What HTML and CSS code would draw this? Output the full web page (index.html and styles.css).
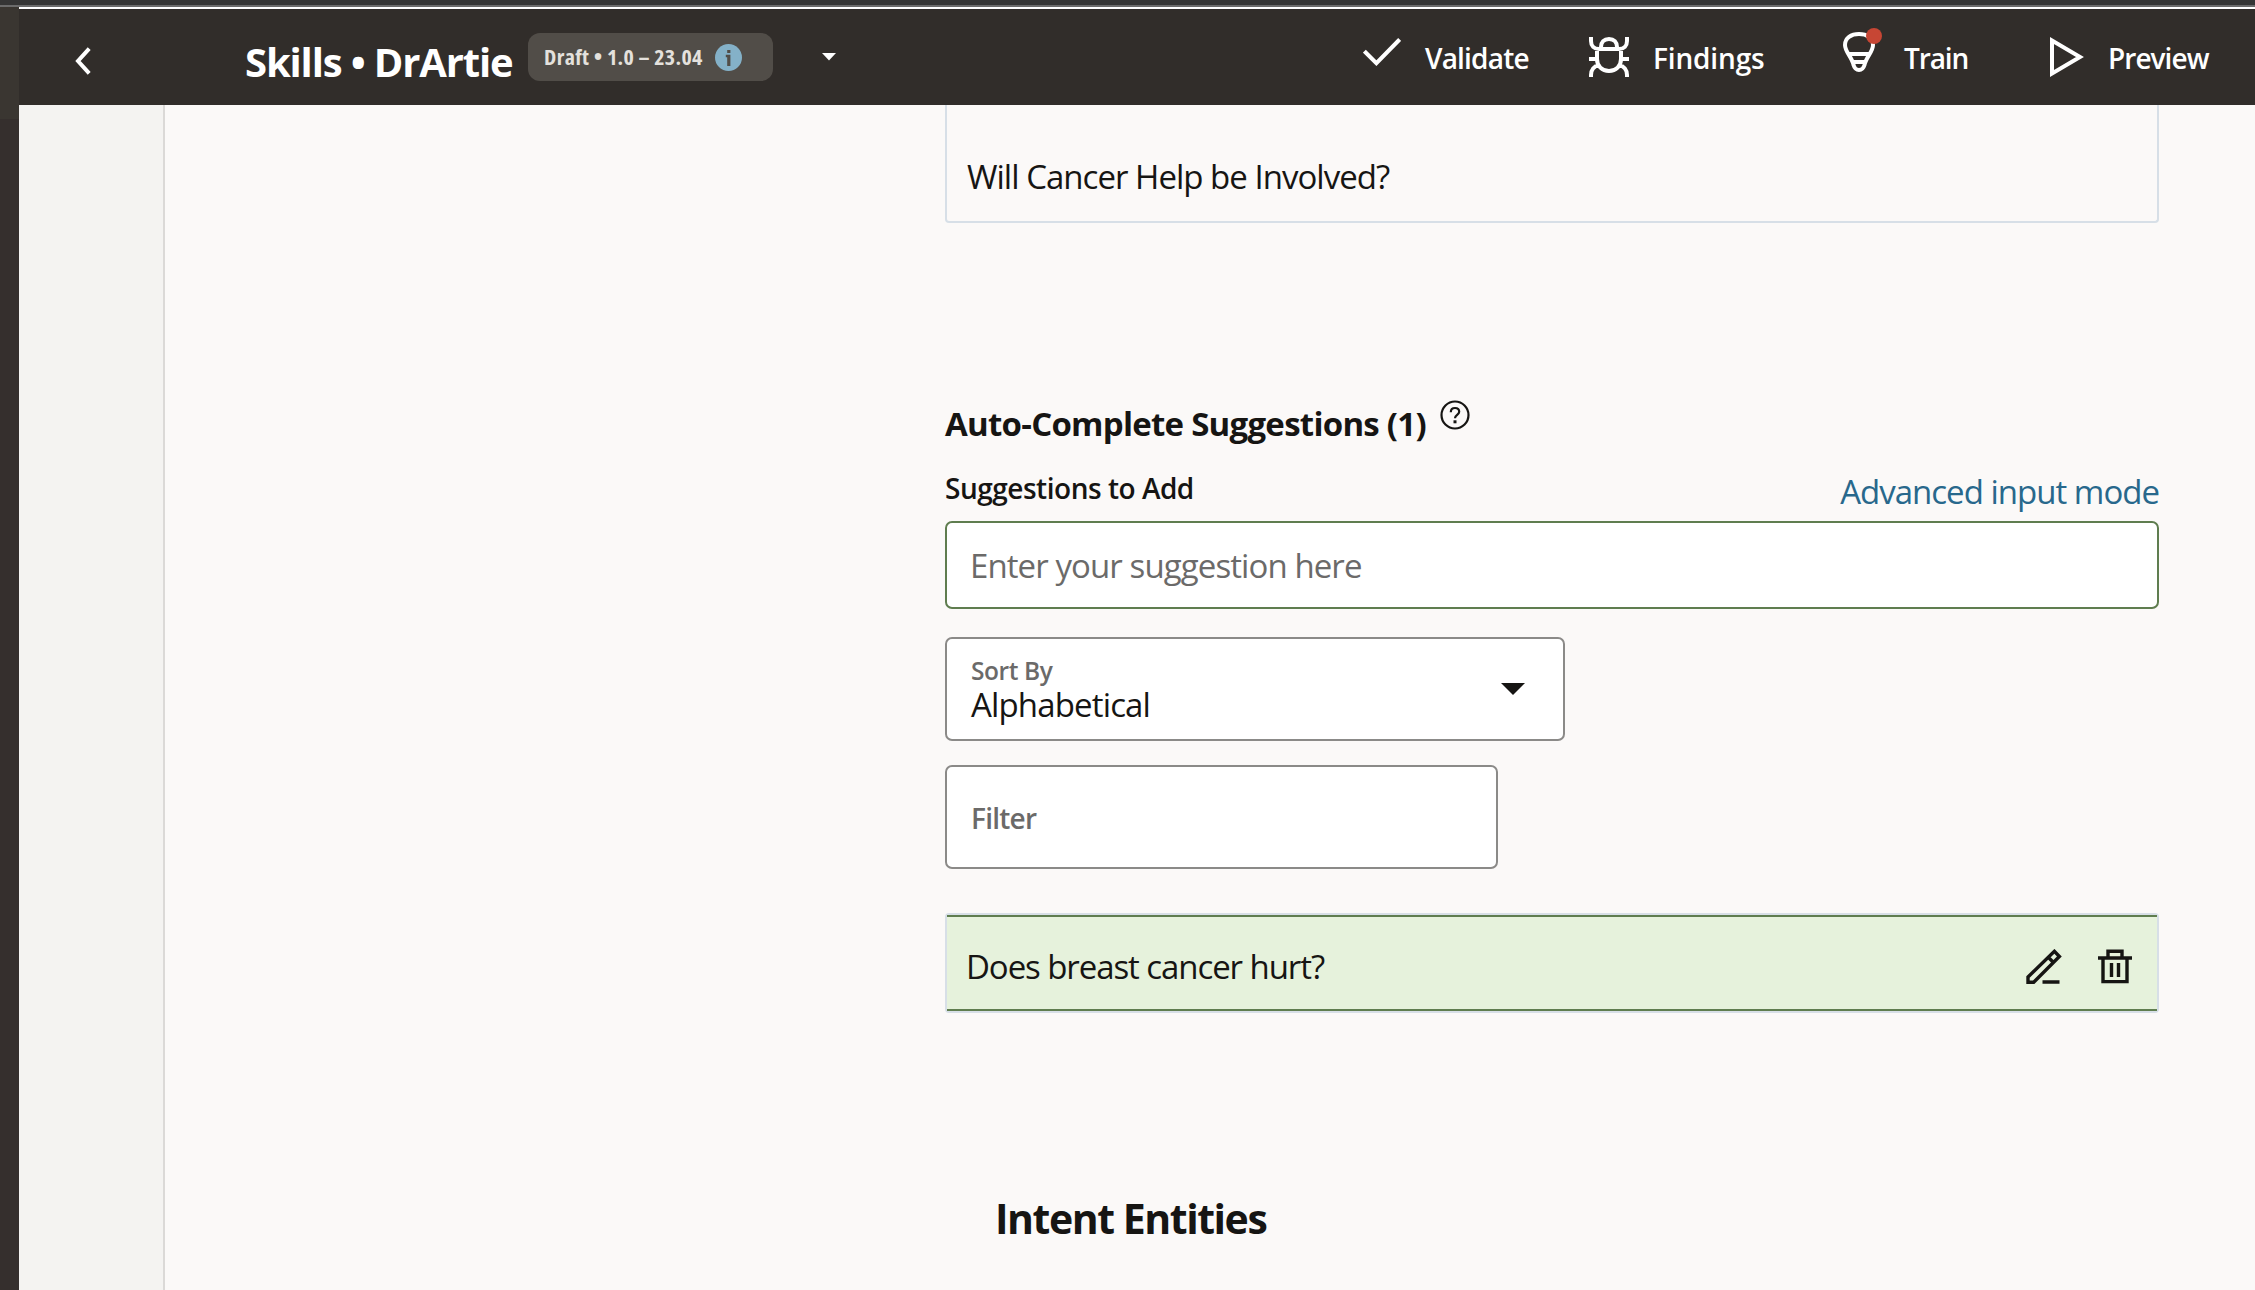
FILE: index.html
```
<!DOCTYPE html>
<html lang="en">
<head>
<meta charset="utf-8">
<title>Skills • DrArtie</title>
<link rel="stylesheet" href="styles.css">
</head>
<body>
<div class="window-edge"></div>
<div class="shell">
  <div class="rail"></div>
  <div class="app">
    <header class="topbar">
      <svg class="back" width="16" height="28" viewBox="0 0 16 28"><path d="M14.2 1.6 3 14l11.2 12.4" fill="none" stroke="#fff" stroke-width="4"/></svg>
      <h1 class="title">Skills • DrArtie</h1>
      <div class="badge">
        <span class="badge-text">Draft • 1.0 – 23.04</span>
        <svg width="27" height="27" viewBox="0 0 27 27"><circle cx="13.5" cy="13.5" r="13.5" fill="#84b1c8"/><path d="M12.2 6h3.2v3h-3.2zM10.8 10.8h4.6V22h-3.2v-8.800h-1.4z" fill="#514d48"/></svg>
      </div>
      <svg class="version-caret" width="14" height="8" viewBox="0 0 14 8"><path d="M0 0h14L7 7.5z" fill="#fff"/></svg>
      <nav class="actions">
        <button class="action validate">
          <svg width="38" height="28" viewBox="0 0 38 28"><path d="m1.4 13.2 12 12L36.600 1.500" fill="none" stroke="#fff" stroke-width="4"/></svg>
          <span>Validate</span>
        </button>
        <button class="action findings">
          <svg width="40" height="40" viewBox="0 0 40 40" fill="none" stroke="#fff" stroke-width="4"><path d="M2 0v4c0 5 3 8 8 8M38 0v4c0 5-3 8-8 8M0 22h8M32 22h8M2 40v-2c0-5 3-9 8-10M38 40v-2c0-5-3-9-8-10M8 12h24v10c0 7-5 12-12 12S8 29 8 22zM12 12v-2c0-5 3-8 8-8s8 3 8 8v2"/></svg>
          <span>Findings</span>
        </button>
        <button class="action train">
          <svg width="40" height="45" viewBox="0 0 40 45"><path d="M16 6C8 6 2 10 2 17c0 7 7 12 8.500 20 1 3.300 3 5 5.500 5s4.500-1.700 5.500-5C23 29 30 24 30 17c0-7-6-11-14-11zM6 26h20M9.500 34h13" fill="none" stroke="#fff" stroke-width="4"/><circle cx="31" cy="8" r="8" fill="#c74634"/></svg>
          <span>Train</span>
        </button>
        <button class="action preview">
          <svg width="34" height="40" viewBox="0 0 34 40"><path d="M2 3.500v33L30 20z" fill="none" stroke="#fff" stroke-width="4"/></svg>
          <span>Preview</span>
        </button>
      </nav>
    </header>
    <div class="content">
      <aside class="side"></aside>
      <main class="main">
        <div class="utterances"><p class="item-text will">Will Cancer Help be Involved?</p></div>
        <div class="heading">
          <h2>Auto-Complete Suggestions (1)</h2>
          <svg width="30" height="30" viewBox="0 0 30 30" fill="none" stroke="#161513" stroke-width="2.200"><circle cx="15" cy="15" r="13.500"/><path d="M10.800 12.200c0-2.700 1.700-4.200 4.200-4.200s4.200 1.500 4.200 3.800c0 3-4.200 3.200-4.200 6.400"/><path d="M15 20.300v3" stroke-width="3"/></svg>
        </div>
        <div class="label-row">
          <span class="label">Suggestions to Add</span>
          <a class="mode-link">Advanced input mode</a>
        </div>
        <div class="suggestion-input">Enter your suggestion here</div>
        <div class="select">
          <div><div class="select-label">Sort By</div><div class="select-value">Alphabetical</div></div>
          <svg width="24" height="12" viewBox="0 0 24 12"><path d="M0 0h24L12 12z" fill="#161513"/></svg>
        </div>
        <div class="filter">Filter</div>
        <div class="suggestion-frame">
          <div class="suggestion">
            <span class="item-text">Does breast cancer hurt?</span>
            <div class="tools">
              <svg width="36" height="36" viewBox="0 0 36 36" fill="none" stroke="#161513" stroke-width="3.400"><path d="M2 33.300v-5.300L28.400 2.300l5 5.200L7.700 33.300zM22.500 8.500l5 5M16.500 33h17"/></svg>
              <svg width="34" height="35" viewBox="0 0 34 35" fill="none" stroke="#161513" stroke-width="3.400"><path d="M0 9h34M5 9v23.600h24V9M10 9V2.200h14V9M13.500 14v14M20.500 14v14"/></svg>
            </div>
          </div>
        </div>
        <h2 class="entities">Intent Entities</h2>
      </main>
    </div>
  </div>
</div>
</body>
</html>
```
FILE: styles.css
```
* { box-sizing: border-box; }
body {
  margin: 0;
  height: 1290px;
  overflow: hidden;
  display: flex;
  flex-direction: column;
  font-family: "Open Sans", "Noto Sans", sans-serif;
  color: #161513;
  white-space: nowrap;
}
h1, h2, p { margin: 0; }
svg { display: block; flex: none; }
.window-edge { height: 7px; flex: none; background: #353535; border-bottom: 2px solid #6b6b6b; }
.shell { flex: 1; display: flex; min-height: 0; }
.rail { width: 19px; background: linear-gradient(#3a3631 112px, #352f2d 112px); }
.app { flex: 1; display: flex; flex-direction: column; border-top: 2px solid #fff; background: #fbf9f8; }

.topbar { height: 96px; flex: none; background: #312d2a; color: #fff; display: flex; align-items: flex-start; }
.back { margin: 38px 0 0 56px; }
.title { margin-left: 154px; padding-top: 25px; width: 283px; font-size: 40px; line-height: 55px; font-weight: 700; letter-spacing: -1.15px; }
.badge { width: 245px; height: 48px; margin-top: 24px; padding-left: 16px; border-radius: 12px; background: #514d48; display: flex; align-items: center; gap: 12px; }
.badge-text { width: 159px; font-size: 22px; line-height: 46px; padding-bottom: 2px; font-weight: 700; font-stretch: 75%; letter-spacing: .35px; color: #e4e1dd; }
.version-caret { margin: 44px 0 0 49px; }
.actions { flex: 1; display: flex; height: 96px; }
.action { display: flex; align-items: flex-start; padding: 0; border: 0; background: none; color: inherit; font: 600 28px/38px "Open Sans", "Noto Sans", sans-serif; }
.action span { margin-top: 30px; }
.validate { margin-left: 527px; width: 226px; gap: 24px; letter-spacing: -.8px; }
.validate svg { margin-top: 29px; }
.findings { width: 254px; gap: 24px; letter-spacing: -.15px; }
.findings svg { margin-top: 28px; }
.train { width: 207px; gap: 21px; letter-spacing: -1.1px; }
.train svg { margin-top: 19px; }
.preview { gap: 24px; letter-spacing: -.95px; }
.preview svg { margin-top: 28px; }

.content { flex: 1; display: flex; min-height: 0; }
.side { width: 146px; background: #f4f3f1; border-right: 2px solid #dbd9d7; }
.main { width: 1214px; margin-left: 780px; display: flex; flex-direction: column; }
.utterances { height: 118px; padding: 49px 0 0 20px; border: 2px solid #d7dfe7; border-top: 0; border-radius: 0 0 4px 4px; }
.item-text { font-size: 33px; line-height: 46px; letter-spacing: -1.08px; }
.will { letter-spacing: -.98px; }
.heading { margin-top: 176px; display: flex; gap: 14px; height: 55px; }
.heading h2 { font-size: 33px; line-height: 46px; width: 481px; margin-top: 2px; font-weight: 700; letter-spacing: -.74px; }
.heading svg { margin-top: 1px; }
.label-row { display: flex; justify-content: space-between; height: 67px; }
.label { font-size: 28px; line-height: 38px; font-weight: 600; letter-spacing: -.48px; margin-top: 15px; }
.mode-link { font-size: 33px; line-height: 46px; letter-spacing: -.99px; color: #28688c; margin-top: 15px; }
.suggestion-input { height: 88px; padding: 20px 0 0 23px; background: #fff; border: 2px solid #5f7d4f; border-radius: 7px; font-size: 33px; line-height: 46px; letter-spacing: -.91px; color: #6b6a69; }
.select { width: 620px; height: 104px; margin-top: 28px; padding: 15px 38px 0 24px; background: #fff; border: 2px solid #8b8a88; border-radius: 7px; display: flex; justify-content: space-between; }
.select-label { font-size: 24.5px; line-height: 34px; font-weight: 600; letter-spacing: -.4px; color: #6b6a69; }
.select-value { font-size: 33px; line-height: 34px; letter-spacing: -.85px; }
.select svg { margin-top: 29px; }
.filter { width: 553px; height: 104px; margin-top: 24px; padding-left: 24px; background: #fff; border: 2px solid #8b8a88; border-radius: 7px; font-size: 28px; line-height: 102px; font-weight: 600; letter-spacing: -.75px; color: #6b6a69; }
.suggestion-frame { margin-top: 44px; height: 100px; border: 2px solid #d7dfe7; border-radius: 4px; }
.suggestion { height: 96px; padding: 0 25px 0 19px; background: #e6f2dc; border-top: 2px solid #5f7d4f; border-bottom: 2px solid #5f7d4f; display: flex; justify-content: space-between; align-items: center; }
.suggestion .item-text { padding-top: 8px; }
.tools { display: flex; gap: 36px; padding-top: 8px; }
.entities { margin: 177px 0 0 50px; font-size: 41px; line-height: 56px; font-weight: 700; letter-spacing: -1.45px; }
```
